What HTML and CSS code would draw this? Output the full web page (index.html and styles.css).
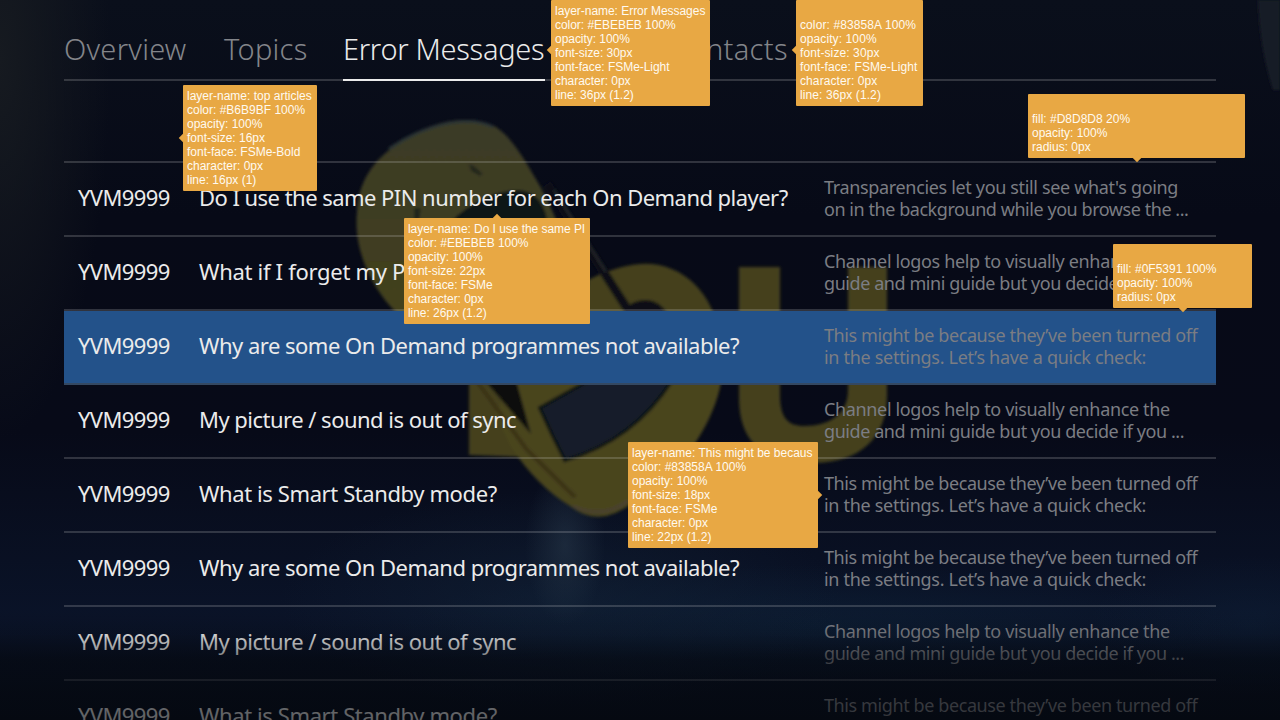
FILE: index.html
```html
<!DOCTYPE html>
<html lang="en">
<head>
<meta charset="utf-8">
<title>Error Messages</title>
<link rel="stylesheet" href="styles.css">
</head>
<body>
<div class="screen">
  <svg class="backdrop" viewBox="0 0 1280 720" aria-hidden="true">
    <defs>
      <filter id="soft"><feGaussianBlur stdDeviation="1.8"/></filter>
      <linearGradient id="head" x1="0" y1="0" x2="0" y2="1">
        <stop offset="0" stop-color="#3a3a26"/>
        <stop offset="1" stop-color="#44411b"/>
      </linearGradient>
    </defs>
    <path d="M1258 0h22v90h-7q-13-40-15-90z" fill="#171d27" filter="url(#soft)"/>
    <g filter="url(#soft)">
      <path d="M357 212C358 182 374 158 400 143C430 122 465 113 494 126C512 136 526 162 541 188C552 208 561 232 575 264L612 326C590 345 558 352 528 352L440 345C405 325 384 304 370 276C359 254 355 232 357 212Z" fill="url(#head)"/>
      <path d="M389 149C430 121 470 116 493 127" fill="none" stroke="#2c3435" stroke-width="3"/>
      <path d="M450 222Q485 190 520 190Q545 194 548 226Q505 218 455 226Z" fill="#111414"/>
      <path d="M469 164l5 2 9 8-3 2-9-5zM414 208l7 0-2 14-5-3z" fill="#24251e"/>
      <path d="M588 280Q625 262 652 264C690 268 718 300 722 350C724 410 695 455 655 462L469 455V376H590V330L590 326Z" fill="#44411b"/>
      <path d="M632 303C657 292 674 312 678 345L650 370L620 318Z" fill="#070a18"/>
      <path d="M547 184L632 316" stroke="#0b0f17" stroke-width="9"/>
      <path d="M554 190L606 272" stroke="#262b2c" stroke-width="2"/>
      <path d="M739 267H780V395C780 418 788 426 804 426C830 426 848 414 848 390V267H887V395C887 438 860 462 815 463C765 464 739 444 739 397Z" fill="#44411b"/>
      <path d="M510 383H721C715 415 690 468 632 503Q599 529 570 506Q537 486 511 447L495 414Z" fill="#48441c"/>
      <path d="M484 380L531 434L516 380" fill="#0a0b10"/>
      <path d="M476 380L527 450L575 497" fill="none" stroke="#3a3118" stroke-width="4"/>
      <path d="M540 408L590 380H672Q634 440 565 460Q552 435 540 408Z" fill="#141f2b" stroke="#111516" stroke-width="4"/>
      <path d="M573 506Q601 520 628 501" fill="none" stroke="#484033" stroke-width="3"/>
    </g>
  </svg>

  <div class="page">
    <nav class="tabs">
      <a class="tab overview">Overview</a>
      <a class="tab topics">Topics</a>
      <a class="tab errors active">Error Messages</a>
      <a class="tab contacts">Contacts</a>
    </nav>
    <main class="list">
      <div class="row"><div class="code">YVM9999</div><div class="question"><span class="q-pin">Do I use the same PIN number for each On Demand player?</span></div><div class="answer"><p class="a-clear">Transparencies let you still see what's going</p><p class="a-back">on in the background while you browse the ...</p></div></div>
      <div class="row"><div class="code">YVM9999</div><div class="question"><span class="q-forget">What if I forget my PIN?</span></div><div class="answer"><p class="a-logo">Channel logos help to visually enhance the</p><p class="a-guide">guide and mini guide but you decide if you ...</p></div></div>
      <div class="row selected"><div class="code">YVM9999</div><div class="question"><span class="q-why">Why are some On Demand programmes not available?</span></div><div class="answer"><p class="a-off">This might be because they’ve been turned off</p><p class="a-check">in the settings. Let’s have a quick check:</p></div></div>
      <div class="row"><div class="code">YVM9999</div><div class="question"><span class="q-sync">My picture / sound is out of sync</span></div><div class="answer"><p class="a-logo">Channel logos help to visually enhance the</p><p class="a-guide">guide and mini guide but you decide if you ...</p></div></div>
      <div class="row"><div class="code">YVM9999</div><div class="question"><span class="q-smart">What is Smart Standby mode?</span></div><div class="answer"><p class="a-off">This might be because they’ve been turned off</p><p class="a-check">in the settings. Let’s have a quick check:</p></div></div>
      <div class="row"><div class="code">YVM9999</div><div class="question"><span class="q-why">Why are some On Demand programmes not available?</span></div><div class="answer"><p class="a-off">This might be because they’ve been turned off</p><p class="a-check">in the settings. Let’s have a quick check:</p></div></div>
      <div class="row"><div class="code">YVM9999</div><div class="question"><span class="q-sync">My picture / sound is out of sync</span></div><div class="answer"><p class="a-logo">Channel logos help to visually enhance the</p><p class="a-guide">guide and mini guide but you decide if you ...</p></div></div>
      <div class="row"><div class="code">YVM9999</div><div class="question"><span class="q-smart">What is Smart Standby mode?</span></div><div class="answer"><p class="a-off">This might be because they’ve been turned off</p></div></div>
    </main>
  </div>
  <div class="fade"></div>

  <aside class="note note-tab left">layer-name: Error Messages
color: #EBEBEB 100%
opacity: 100%
font-size: 30px
font-face: FSMe-Light
character: 0px
line: 36px (1.2)</aside>
  <aside class="note note-contacts left">color: #83858A 100%
opacity: 100%
font-size: 30px
font-face: FSMe-Light
character: 0px
line: 36px (1.2)</aside>
  <aside class="note note-articles left">layer-name: top articles
color: #B6B9BF 100%
opacity: 100%
font-size: 16px
font-face: FSMe-Bold
character: 0px
line: 16px (1)</aside>
  <aside class="note note-question top">layer-name: Do I use the same PI
color: #EBEBEB 100%
opacity: 100%
font-size: 22px
font-face: FSMe
character: 0px
line: 26px (1.2)</aside>
  <aside class="note note-answer right">layer-name: This might be becaus
color: #83858A 100%
opacity: 100%
font-size: 18px
font-face: FSMe
character: 0px
line: 22px (1.2)</aside>
  <aside class="note note-line bottom">fill: #D8D8D8 20%
opacity: 100%
radius: 0px</aside>
  <aside class="note note-fill bottom">fill: #0F5391 100%
opacity: 100%
radius: 0px</aside>
</div>
</body>
</html>
```
FILE: styles.css
```css
* { box-sizing: border-box; }
body { margin: 0; background: #070a17; }
.screen {
  position: relative;
  width: 1280px;
  height: 720px;
  overflow: hidden;
  font-family: "Noto Sans", "Open Sans", sans-serif;
  background:
    radial-gradient(ellipse 110px 380px at 0 60px, #161a20, transparent),
    radial-gradient(ellipse 40px 80px at 565px 545px, rgba(38, 54, 72, .6), transparent),
    radial-gradient(ellipse 280px 110px at 560px 600px, rgba(18, 34, 54, .6), transparent),
    radial-gradient(ellipse 420px 60px at 820px 625px, rgba(14, 34, 56, .6), transparent),
    radial-gradient(ellipse 160px 70px at 1250px 625px, rgba(16, 36, 60, .4), transparent),
    linear-gradient(#0a0f1b, #070a17 30%, #070a18 60%, #0a1328 86%, #080f1c);
}
.backdrop { position: absolute; inset: 0; width: 1280px; height: 720px; }
.page { position: relative; padding: 0 64px; }
.tabs {
  display: flex;
  height: 81px;
  margin-bottom: 80px;
  border-bottom: 2px solid rgba(216, 216, 216, .2);
  font-size: 29px;
  font-weight: 300;
  line-height: 36px;
}
.tab {
  height: 81px;
  padding-top: 31px;
  color: #83858a;
  white-space: nowrap;
}
.overview { width: 160px; letter-spacing: .25px; }
.topics { width: 119px; letter-spacing: .25px; }
.errors { width: 202px; margin-right: 37px; letter-spacing: -.3px; }
.contacts { width: 120px; letter-spacing: .35px; margin-left: 88px; }
.active { color: #ebebeb; border-bottom: 2px solid #ebebeb; }
.row {
  display: grid;
  grid-template-columns: 121px 625px 1fr;
  height: 74px;
  padding-left: 14px;
  border-top: 2px solid rgba(216, 216, 216, .2);
  color: #ebebeb;
  font-size: 22px;
  line-height: 26px;
  white-space: nowrap;
}
.code, .question { padding-top: 21px; }
.code { letter-spacing: -.6px; }
.q-pin { letter-spacing: -.54px; }
.q-forget { letter-spacing: -.3px; }
.q-why { letter-spacing: -.51px; }
.q-sync { letter-spacing: -.52px; }
.q-smart { letter-spacing: -.4px; }
.selected {
  background: #23528a;
  background-clip: padding-box;
}
.selected + .row { border-top-color: #344861; }
.answer {
  padding-top: 13px;
  color: #7b7d83;
  font-size: 18px;
  line-height: 22px;
  letter-spacing: -.4px;
}
.answer p { margin: 0; }
.a-clear { letter-spacing: -.34px; }
.a-back { letter-spacing: -.445px; }
.a-guide { letter-spacing: -.43px; }
.a-logo { letter-spacing: -.35px; }
.a-check { letter-spacing: -.3px; }
.fade {
  position: absolute;
  inset: 610px 0 0;
  background: linear-gradient(rgba(3, 5, 10, 0), rgba(3, 5, 10, .12) 22%, rgba(3, 5, 10, .5) 45%, rgba(3, 5, 10, .6));
}
.note {
  position: absolute;
  padding: 4px;
  border-radius: 1px;
  background: #e8a844;
  color: #fffaf0;
  font: 12px/14px "Liberation Sans", Arial, sans-serif;
  white-space: pre;
}
.note::after {
  content: "";
  position: absolute;
  width: 6px;
  height: 6px;
  background: #e8a844;
  transform: rotate(45deg);
}
.left::after { left: -3px; top: 50px; }
.right::after { right: -3px; top: 50px; }
.top::after { left: 90px; top: -3px; }
.bottom::after { bottom: -3px; left: calc(50% - 3px); }
.note-tab { left: 551px; top: 0; width: 159px; height: 106px; letter-spacing: -.04px; }
.note-contacts { left: 796px; top: 0; width: 127px; height: 106px; padding-top: 18px; letter-spacing: .1px; }
.note-tab::after, .note-contacts::after { top: 47px; }
.note-articles { left: 183px; top: 85px; width: 134px; height: 106px; }
.note-question { left: 404px; top: 218px; width: 186px; height: 106px; letter-spacing: -.05px; }
.note-answer { left: 628px; top: 442px; width: 190px; height: 106px; }
.note-line { left: 1028px; top: 94px; width: 217px; height: 64px; padding-top: 18px; }
.note-fill { left: 1113px; top: 244px; width: 139px; height: 64px; padding-top: 18px; }
```
